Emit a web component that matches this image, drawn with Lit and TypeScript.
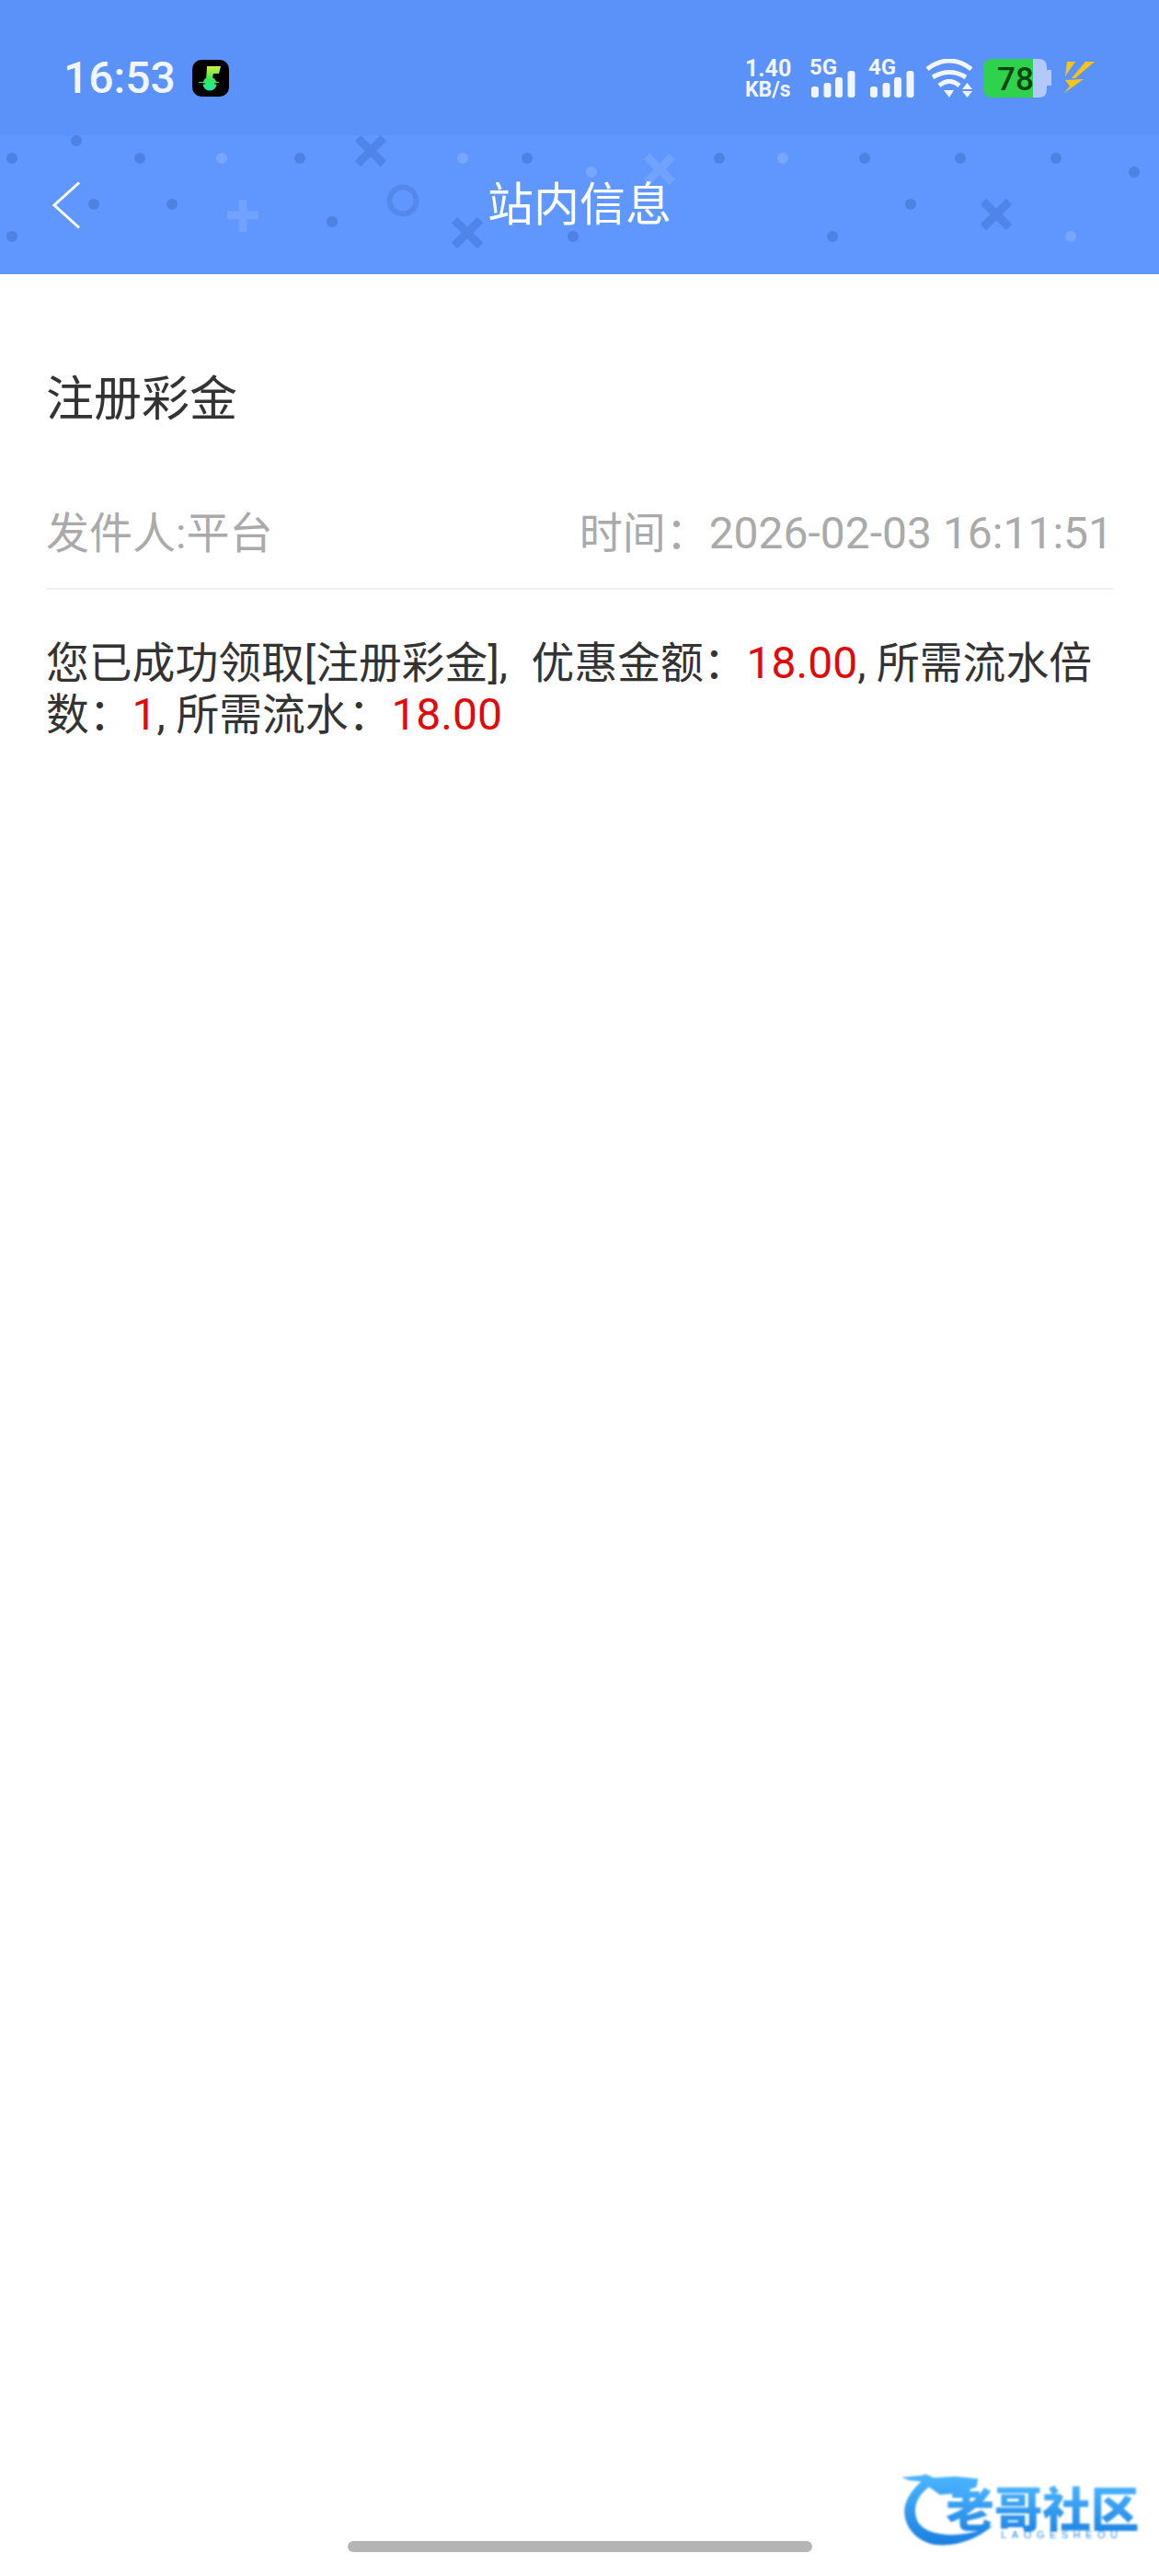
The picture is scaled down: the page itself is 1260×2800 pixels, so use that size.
import { LitElement, html, svg, css } from 'lit';
import { customElement } from 'lit/decorators.js';

// header pattern, coordinates are relative to the nav bar
const DARK_DOTS = [
  [83, 6], [13, 25], [152, 25], [326, 25], [102, 75], [187, 75], [13, 110], [361, 94],
  [573, 25], [782, 25], [623, 110], [940, 25], [1044, 25], [1148, 25], [1233, 40], [990, 75], [905, 110],
];
const LIGHT_DOTS = [[241, 25], [503, 25], [643, 40], [851, 25], [1164, 110]];
const DARK_CROSSES = [[403, 17], [508, 106], [1083, 86]];

const cross = (x: number, y: number, color: string) => svg`
  <path d="M${x - 14} ${y - 14}L${x + 14} ${y + 14}M${x + 14} ${y - 14}L${x - 14} ${y + 14}" stroke=${color} stroke-width="9" fill="none" />
`;

const signal = (label: string) => html`
  <svg class="signal" viewBox="0 0 52 42">
    <text x="0" y="17" class="signal-label">${label}</text>
    <rect x="2" y="30" width="8" height="12" rx="3" />
    <rect x="15.500" y="26" width="8" height="16" rx="3" />
    <rect x="28" y="20" width="8" height="22" rx="3" />
    <rect x="41.500" y="13" width="8" height="29" rx="3" />
  </svg>
`;

@customElement('app-root')
export class AppRoot extends LitElement {
  static styles = css`
    :host {
      display: flex;
      flex-direction: column;
      position: relative;
      height: 2800px;
      background: #fff;
      font-family: Roboto, 'Noto Sans CJK SC', sans-serif;
    }

    .status-bar {
      display: flex;
      align-items: center;
      box-sizing: border-box;
      height: 147px;
      padding: 23px 70px 0 69px;
      background: #5b92f9;
      color: #f0f5ff;
    }

    .time {
      font-size: 48px;
      font-weight: 500;
      line-height: 1;
    }

    .app-icon {
      width: 40px;
      height: 40px;
      margin-left: 18px;
    }

    .status-icons {
      display: flex;
      align-items: center;
      gap: 12px;
      margin-left: auto;
    }

    .speed {
      width: 58px;
      font-weight: 700;
      white-space: nowrap;
    }

    .speed div:first-child {
      font-size: 25px;
      line-height: 25px;
    }

    .speed div:last-child {
      font-size: 23px;
      line-height: 21px;
    }

    .signal {
      width: 52px;
      height: 42px;
      overflow: visible;
      fill: #f0f5ff;
    }

    .signal-label {
      font-size: 24px;
      font-weight: 700;
    }

    .wifi {
      width: 51px;
      height: 42px;
      margin-left: -2px;
    }

    .battery {
      width: 74px;
      height: 42px;
    }

    .battery-level {
      font-size: 35px;
      font-weight: 500;
      fill: #07450f;
    }

    .bolt {
      width: 35px;
      height: 35px;
      margin-top: -3px;
    }

    .nav {
      position: relative;
      display: grid;
      grid-template-columns: 1fr auto 1fr;
      align-items: center;
      height: 151px;
      background: #5f97ff;
    }

    .nav-pattern {
      position: absolute;
      inset: 0;
      width: 100%;
      height: 100%;
    }

    .back {
      position: relative;
      width: 30px;
      height: 52px;
      margin-left: 57px;
    }

    .nav-title {
      position: relative;
      color: #fff;
      font-size: 50px;
      line-height: 60px;
    }

    .content {
      flex: 1;
      padding: 107px 50px 0;
    }

    .title {
      margin: 0 0 85px;
      color: #333;
      font-size: 52px;
      font-weight: 400;
      line-height: 60px;
    }

    .meta {
      display: flex;
      justify-content: space-between;
      padding-bottom: 29px;
      border-bottom: 2px solid #eee;
      color: #aaa;
      font-size: 47px;
      line-height: 60px;
    }

    .body {
      margin: 52px 0 0;
      color: #333;
      font-size: 46.800px;
      line-height: 55px;
    }

    /* latin digits run a little larger than the CJK text around them */
    .num {
      font-size: 48px;
    }

    .comma-gap {
      padding-right: 14px;
    }

    .amount {
      color: #e00a0a;
      font-size: 48px;
    }

    .home-bar {
      align-self: center;
      width: 505px;
      height: 12px;
      margin-bottom: 26px;
      border-radius: 6px;
      background: #b5b5b5;
    }

    .watermark {
      position: absolute;
      right: 0;
      bottom: 0;
      width: 300px;
      height: 140px;
      filter: blur(0.8px);
    }

    .watermark-name {
      font-size: 158px;
      font-weight: 900;
    }

    .watermark-latin {
      font-family: 'Liberation Sans', sans-serif;
      font-size: 32px;
      fill: #2b8fe8;
    }
  `;

  render() {
    return html`
      <div class="status-bar">
        <span class="time">16:53</span>
        <svg class="app-icon" viewBox="0 0 40 40">
          <defs>
            <linearGradient id="note" gradientUnits="userSpaceOnUse" x1="0" y1="7" x2="0" y2="34">
              <stop offset="0" stop-color="#d4f23e" />
              <stop offset="0.55" stop-color="#35e85a" />
              <stop offset="1" stop-color="#20e8b0" />
            </linearGradient>
          </defs>
          <rect width="40" height="40" rx="10" fill="#000" />
          <path d="M16 7H31L29 15H23L21 24H15Z" fill="url(#note)" />
          <circle cx="19" cy="26" r="7.500" fill="url(#note)" />
          <path d="M7 24.500H29" stroke="#35e85a" stroke-width="1" />
          <path d="M8 26H14M24 26H30" stroke="#000" stroke-width="1" />
        </svg>

        <div class="status-icons">
          <div class="speed">
            <div>1.40</div>
            <div>KB/s</div>
          </div>
          ${signal('5G')} ${signal('4G')}
          <svg class="wifi" viewBox="0 0 51 42">
            <path d="M2 11Q26 -7 50 11M8 20Q26 9 44 20M15 29Q26 20 37 29" fill="none" stroke="#f0f5ff" stroke-width="5" />
            <path d="M20 34H31L26 42ZM40 33H51L45.500 26ZM40 35H51L45.500 42Z" fill="#f0f5ff" />
          </svg>
          <svg class="battery" viewBox="0 0 74 42">
            <path d="M54 0H60Q69 0 69 9V12H74V29H69V33Q69 42 60 42H54Z" fill="#b4c9fb" />
            <path d="M10 0H54V42H10Q0 42 0 32V10Q0 0 10 0Z" fill="#2fd24c" />
            <text x="15" y="33.500" class="battery-level">78</text>
          </svg>
          <svg class="bolt" viewBox="0 0 35 35">
            <path d="M5 1H14L3 17ZM25 1H35L14 19H10ZM3 21L23 20L2 35L8 27.500Z" fill="#f6c51b" />
          </svg>
        </div>
      </div>

      <div class="nav">
        <svg class="nav-pattern" viewBox="0 0 1260 151">
          ${DARK_DOTS.map(([x, y]) => svg`<circle cx=${x} cy=${y} r="6" fill="#4d82e3" />`)}
          ${LIGHT_DOTS.map(([x, y]) => svg`<circle cx=${x} cy=${y} r="6" fill="#78a6ff" />`)}
          ${DARK_CROSSES.map(([x, y]) => cross(x, y, '#4f85e8'))}
          ${cross(717, 37, '#70a3ff')}
          <path d="M264 70V105M247 87H281" stroke="#70a3ff" stroke-width="9" fill="none" />
          <circle cx="438" cy="71" r="14.500" stroke="#5488ea" stroke-width="6" fill="none" />
        </svg>
        <svg class="back" viewBox="0 0 30 52">
          <path d="M29 1.500L2 26L29 50.500" fill="none" stroke="#fff" stroke-width="3" />
        </svg>
        <span class="nav-title">站内信息</span>
      </div>

      <div class="content">
        <h1 class="title">注册彩金</h1>
        <div class="meta">
          <span>发件人:平台</span>
          <span>时间：<span class="num">2026-02-03 16:11:51</span></span>
        </div>
        <p class="body">
          您已成功领取[注册彩金]<span class="comma-gap">,</span> 优惠金额：<span class="amount">18.00</span>, 所需流水倍数：<span class="amount">1</span>, 所需流水：<span class="amount">18.00</span>
        </p>
      </div>

      <div class="home-bar"></div>

      <svg class="watermark" viewBox="0 0 900 420">
        <defs>
          <linearGradient id="wm" x1="0" y1="0" x2="0" y2="1">
            <stop offset="0" stop-color="#4db6ff" />
            <stop offset="1" stop-color="#1a7fe0" />
          </linearGradient>
        </defs>
        <path d="M60 98L125 92L140 88L165 100L235 95L310 103L305 130L245 150L185 155L165 140L150 130C110 160 95 200 112 240C140 295 260 300 360 255C300 305 230 325 170 318C95 305 60 240 72 190C82 155 105 130 125 112L85 108Z" fill="url(#wm)" />
        <text x="205" y="262" textLength="630" class="watermark-name" fill="url(#wm)">老哥社区</text>
        <text x="385" y="298" textLength="380" class="watermark-latin">LAOGESHEOU</text>
      </svg>
    `;
  }
}
